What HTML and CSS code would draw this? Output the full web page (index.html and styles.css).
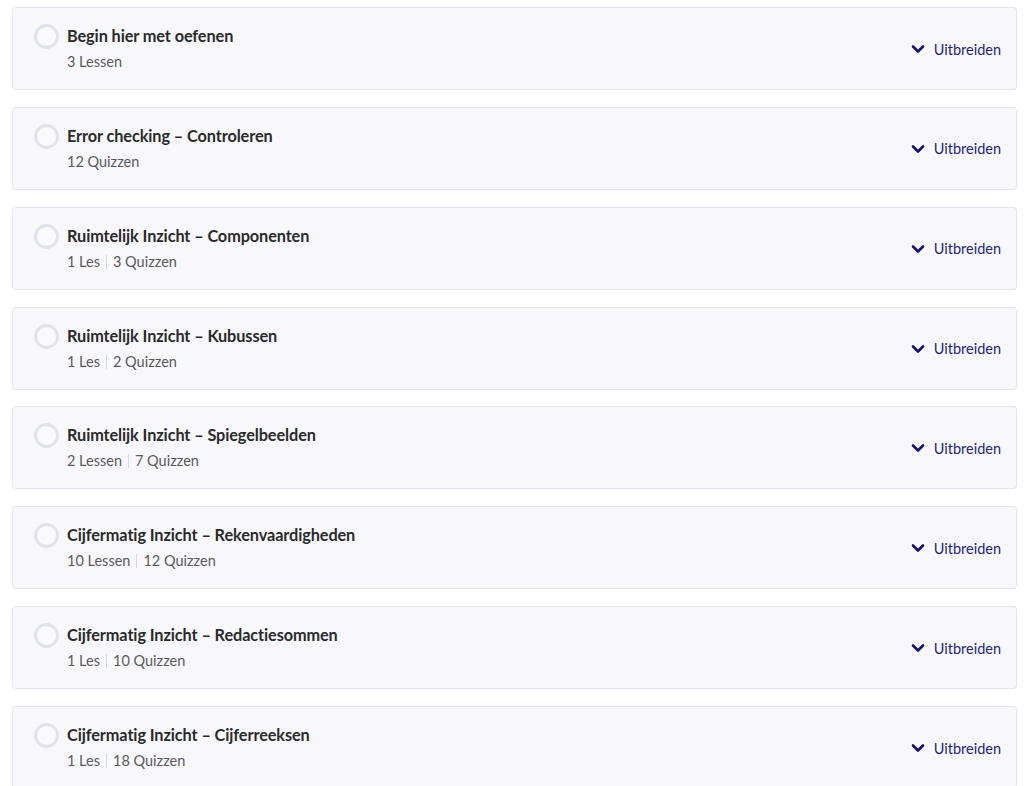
FILE: index.html
```html
<!DOCTYPE html>
<html lang="nl">
<head>
<meta charset="utf-8">
<title>Cursus</title>
<link rel="stylesheet" href="styles.css">
</head>
<body>
<div class="list">
  <div class="card">
    <div class="main">
      <span class="ring"></span>
      <div class="info">
        <div class="title">Begin hier met oefenen</div>
        <div class="meta"><span>3 Lessen</span></div>
      </div>
    </div>
    <div class="expand"><svg viewBox="0 0 14 10" class="chev"><path d="M2 2.5 L7 7.5 L12 2.5"/></svg>Uitbreiden</div>
  </div>
  <div class="card">
    <div class="main">
      <span class="ring"></span>
      <div class="info">
        <div class="title">Error checking – Controleren</div>
        <div class="meta"><span>12 Quizzen</span></div>
      </div>
    </div>
    <div class="expand"><svg viewBox="0 0 14 10" class="chev"><path d="M2 2.5 L7 7.5 L12 2.5"/></svg>Uitbreiden</div>
  </div>
  <div class="card">
    <div class="main">
      <span class="ring"></span>
      <div class="info">
        <div class="title">Ruimtelijk Inzicht – Componenten</div>
        <div class="meta"><span>1 Les</span><span class="sep"></span><span>3 Quizzen</span></div>
      </div>
    </div>
    <div class="expand"><svg viewBox="0 0 14 10" class="chev"><path d="M2 2.5 L7 7.5 L12 2.5"/></svg>Uitbreiden</div>
  </div>
  <div class="card">
    <div class="main">
      <span class="ring"></span>
      <div class="info">
        <div class="title">Ruimtelijk Inzicht – Kubussen</div>
        <div class="meta"><span>1 Les</span><span class="sep"></span><span>2 Quizzen</span></div>
      </div>
    </div>
    <div class="expand"><svg viewBox="0 0 14 10" class="chev"><path d="M2 2.5 L7 7.5 L12 2.5"/></svg>Uitbreiden</div>
  </div>
  <div class="card">
    <div class="main">
      <span class="ring"></span>
      <div class="info">
        <div class="title">Ruimtelijk Inzicht – Spiegelbeelden</div>
        <div class="meta"><span>2 Lessen</span><span class="sep"></span><span>7 Quizzen</span></div>
      </div>
    </div>
    <div class="expand"><svg viewBox="0 0 14 10" class="chev"><path d="M2 2.5 L7 7.5 L12 2.5"/></svg>Uitbreiden</div>
  </div>
  <div class="card">
    <div class="main">
      <span class="ring"></span>
      <div class="info">
        <div class="title">Cijfermatig Inzicht – Rekenvaardigheden</div>
        <div class="meta"><span>10 Lessen</span><span class="sep"></span><span>12 Quizzen</span></div>
      </div>
    </div>
    <div class="expand"><svg viewBox="0 0 14 10" class="chev"><path d="M2 2.5 L7 7.5 L12 2.5"/></svg>Uitbreiden</div>
  </div>
  <div class="card">
    <div class="main">
      <span class="ring"></span>
      <div class="info">
        <div class="title">Cijfermatig Inzicht – Redactiesommen</div>
        <div class="meta"><span>1 Les</span><span class="sep"></span><span>10 Quizzen</span></div>
      </div>
    </div>
    <div class="expand"><svg viewBox="0 0 14 10" class="chev"><path d="M2 2.5 L7 7.5 L12 2.5"/></svg>Uitbreiden</div>
  </div>
  <div class="card">
    <div class="main">
      <span class="ring"></span>
      <div class="info">
        <div class="title">Cijfermatig Inzicht – Cijferreeksen</div>
        <div class="meta"><span>1 Les</span><span class="sep"></span><span>18 Quizzen</span></div>
      </div>
    </div>
    <div class="expand"><svg viewBox="0 0 14 10" class="chev"><path d="M2 2.5 L7 7.5 L12 2.5"/></svg>Uitbreiden</div>
  </div>
</div>
</body>
</html>
```
FILE: styles.css
```css
* { box-sizing: border-box; }
html, body { margin: 0; padding: 0; background: #ffffff; }
body {
  font-family: "Lato", "Liberation Sans", sans-serif;
  color: #222;
  overflow: hidden;
}
.list {
  display: flex;
  flex-direction: column;
  gap: 16.86px;
  padding: 7px 15px 0 12px;
}
.card {
  height: 83px;
  flex: none;
  display: flex;
  align-items: center;
  justify-content: space-between;
  background: #f8f8fc;
  border: 1px solid #e4e5ec;
  border-radius: 4px;
  padding: 0 15px 0 21px;
}
.main {
  display: flex;
  align-items: flex-start;
  margin-top: 0;
}
.ring {
  flex: none;
  width: 25px;
  height: 25px;
  border-radius: 50%;
  border: 3px solid #e1e3ea;
  background: #fafafc;
  margin-top: -1px;
}
.info {
  margin-left: 8px;
  display: flex;
  flex-direction: column;
}
.title {
  font-size: 16.3px;
  font-weight: 700;
  color: #2a2a2a;
  line-height: 22px;
  letter-spacing: -0.1px;
}
.meta {
  display: flex;
  align-items: center;
  font-size: 14.5px;
  color: #5a5a5a;
  line-height: 20px;
  margin-top: 5px;
}
.sep {
  width: 1px;
  height: 14px;
  background: #d8d8de;
  margin: 0 6px 0 6px;
}
.expand {
  display: flex;
  align-items: center;
  font-size: 14.5px;
  color: #1f1f7a;
  margin-top: 1px;
}
.chev {
  width: 14px;
  height: 10px;
  margin-right: 9px;
  fill: none;
  stroke: #13136e;
  stroke-width: 2.6;
  stroke-linecap: round;
  stroke-linejoin: round;
}
```
